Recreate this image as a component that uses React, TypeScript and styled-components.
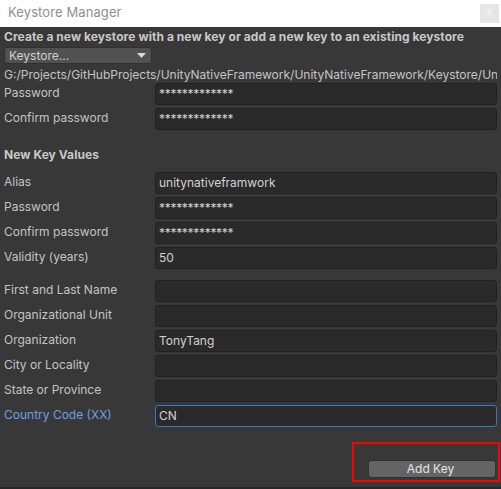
import React from "react";
import styled, { createGlobalStyle } from "styled-components";

const Global = createGlobalStyle`
  html, body { margin: 0; padding: 0; background: #383838; }
  body { font-family: Inter, "Noto Sans", sans-serif; }
`;

const Window = styled.div`
  width: 501px;
  height: 489px;
  display: flex;
  flex-direction: column;
  background: #383838;
  overflow: hidden;
`;

const TitleBar = styled.div`
  height: 27px;
  flex: none;
  background: #ffffff;
  display: flex;
  align-items: flex-start;
  justify-content: space-between;
  box-sizing: border-box;
  padding: 3px 2px 0 8px;
`;

const Title = styled.div`
  font-family: Inter, "Noto Sans", sans-serif;
  font-size: 13px;
  line-height: 18px;
  color: #8f8f8f;
  letter-spacing: 0.1px;
`;

const CloseBtn = styled.div`
  width: 19px;
  height: 19px;
  margin-top: 1px;
  background: #e6e6e6;
  color: #f8f8f8;
  font-size: 11px;
  line-height: 17px;
  text-align: center;
`;

const Body = styled.div`
  flex: 1;
  display: flex;
  flex-direction: column;
  padding: 2px 4px 0 4px;
  color: #c4c4c4;
  font-size: 12px;
`;

const Heading = styled.div<{ $top?: number }>`
  font-weight: 700;
  font-size: 12px;
  line-height: 16px;
  height: 16px;
  color: #c8c8c8;
  letter-spacing: 0.06px;
  white-space: nowrap;
  margin-top: ${(p) => p.$top ?? 0}px;
`;

const Dropdown = styled.div`
  width: 148px;
  height: 17px;
  box-sizing: border-box;
  margin-top: 2px;
  background: #515151;
  border: 1px solid #303030;
  border-radius: 3px;
  display: flex;
  align-items: center;
  justify-content: space-between;
  padding: 0 5px 0 4px;
  color: #d0d0d0;
  font-size: 12px;
`;

const Path = styled.div`
  margin-top: 2px;
  height: 17px;
  line-height: 17px;
  white-space: nowrap;
  overflow: hidden;
  color: #c4c4c4;
`;

const Group = styled.div<{ $top: number }>`
  display: flex;
  flex-direction: column;
  gap: 3px;
  margin-top: ${(p) => p.$top}px;
`;

const Row = styled.div`
  display: flex;
  height: 22px;
`;

const Label = styled.div<{ $focus?: boolean }>`
  width: 151px;
  flex: none;
  padding-top: 2px;
  line-height: 15px;
  color: ${(p) => (p.$focus ? "#6f9fe0" : "#c4c4c4")};
  white-space: nowrap;
`;

const Field = styled.div<{ $focus?: boolean }>`
  flex: 1;
  box-sizing: border-box;
  background: #2a2a2a;
  border: 1px solid ${(p) => (p.$focus ? "#3a79bb" : "#212121")};
  border-radius: 3px;
  padding: 2px 3px 0 3px;
  line-height: 15px;
  color: #d2d2d2;
  white-space: nowrap;
  overflow: hidden;
`;

const Stars = styled.span`
  letter-spacing: -0.3px;
  font-size: 12px;
`;

const Footer = styled.div`
  display: flex;
  justify-content: flex-end;
  margin-top: 15px;
  margin-right: -3px;
`;

const Highlight = styled.div`
  border: 2px solid #ff0000;
  padding: 16px 2px 2px 14px;
`;

const Button = styled.div`
  width: 128px;
  height: 18px;
  box-sizing: border-box;
  background: #646464;
  border: 1px solid #303030;
  border-radius: 3px;
  color: #e4e4e4;
  font-size: 12px;
  line-height: 16px;
  text-align: center;
  padding-right: 3px;
`;

const BottomEdge = styled.div`
  height: 2px;
  flex: none;
  background: #262626;
`;

const Arrow = () => (
  <svg width="9" height="5" viewBox="0 0 9 5">
    <path d="M0 0 L9 0 L4.5 5 Z" fill="#d8d8d8" />
  </svg>
);

type F = { label: string; value?: string; stars?: boolean; focus?: boolean };

const FieldRow = ({ label, value, stars, focus }: F) => (
  <Row>
    <Label $focus={focus}>{label}</Label>
    <Field $focus={focus}>{stars ? <Stars>*************</Stars> : value}</Field>
  </Row>
);

export default function App() {
  return (
    <>
      <Global />
      <Window>
        <TitleBar>
          <Title>Keystore Manager</Title>
          <CloseBtn>x</CloseBtn>
        </TitleBar>
        <Body>
          <Heading>
            Create a new keystore with a new key or add a new key to an existing keystore
          </Heading>
          <Dropdown>
            <span>Keystore...</span>
            <Arrow />
          </Dropdown>
          <Path>G:/Projects/GitHubProjects/UnityNativeFramework/UnityNativeFramework/Keystore/Un</Path>
          <Group $top={0}>
            <FieldRow label="Password" stars />
            <FieldRow label="Confirm password" stars />
          </Group>
          <Heading $top={17}>New Key Values</Heading>
          <Group $top={9}>
            <FieldRow label="Alias" value="unitynativeframwork" />
            <FieldRow label="Password" stars />
            <FieldRow label="Confirm password" stars />
            <FieldRow label="Validity (years)" value="50" />
          </Group>
          <Group $top={11}>
            <FieldRow label="First and Last Name" value="" />
            <FieldRow label="Organizational Unit" value="" />
            <FieldRow label="Organization" value="TonyTang" />
            <FieldRow label="City or Locality" value="" />
            <FieldRow label="State or Province" value="" />
            <FieldRow label="Country Code (XX)" value="CN" focus />
          </Group>
          <Footer>
            <Highlight>
              <Button>Add Key</Button>
            </Highlight>
          </Footer>
        </Body>
        <BottomEdge />
      </Window>
    </>
  );
}
